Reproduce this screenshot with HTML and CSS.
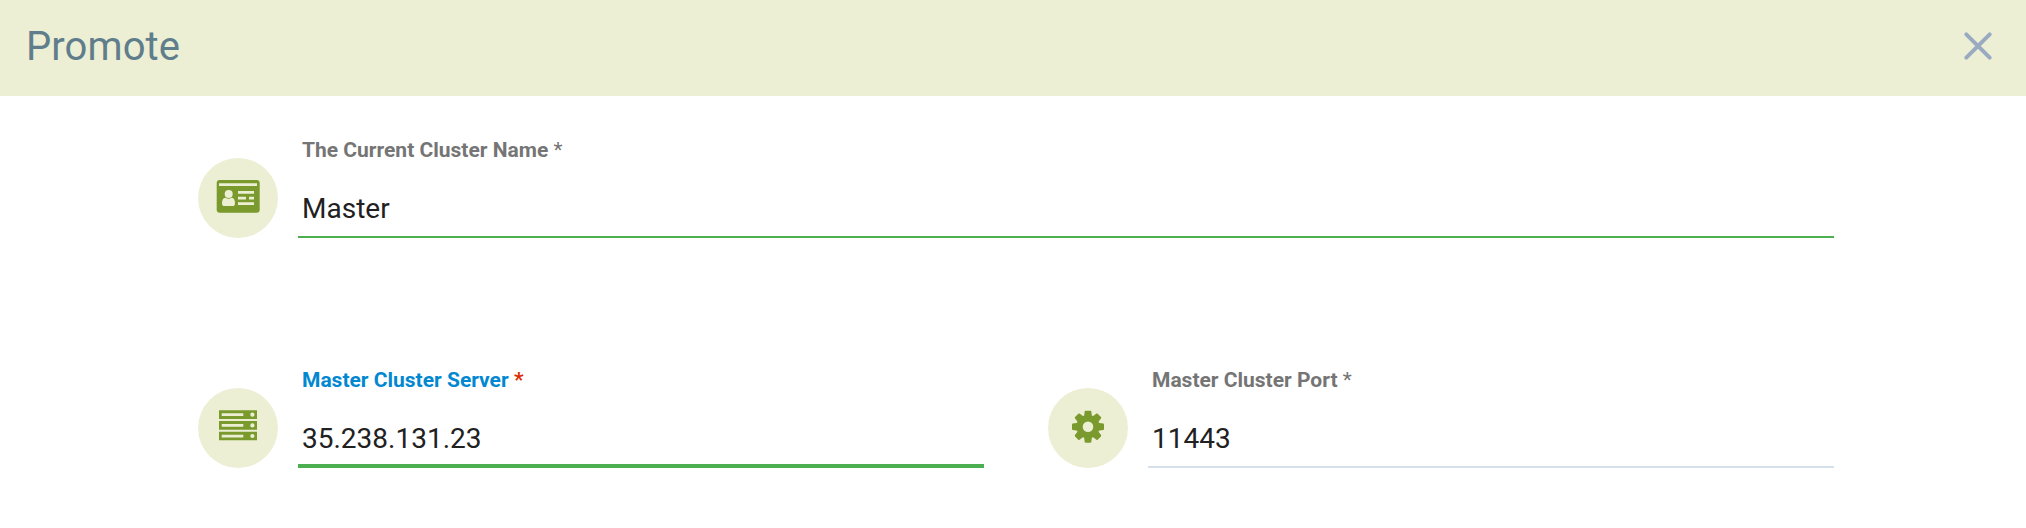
FILE: index.html
```html
<!DOCTYPE html>
<html lang="en">
<head>
<meta charset="utf-8">
<title>Promote</title>
<link rel="stylesheet" href="styles.css">
</head>
<body>
<div class="dialog">
  <header class="toolbar">
    <h1 class="title">Promote</h1>
    <button class="close" type="button" aria-label="Close">
      <svg width="32" height="32" viewBox="0 0 32 32"><path d="M4.300 4.300 27.700 27.700M27.700 4.300 4.300 27.700" stroke="#9aaac1" stroke-width="4" stroke-linecap="round"/></svg>
    </button>
  </header>
  <form class="form">
    <div class="row">
      <div class="group">
        <span class="badge">
          <svg width="80" height="80" viewBox="0 0 80 80">
            <rect class="ink" x="18.700" y="22" width="43" height="32.700" rx="3"/>
            <path class="cut" d="M21 25.300h38v2.700H21zM40 33h16v2.700H40zM40 38.700h8v2.700h-8zM51 38.700h5v2.700h-5zM40 44.300h16v2.700H40z"/>
            <path class="cut" d="M27.300 39.700c-2.400.3-3.300 2.500-3.300 5.500 0 2 1 2.800 2.500 2.800h8c1.500 0 2.500-.8 2.500-2.800 0-3-.9-5.200-3.300-5.500-2 1.500-4.400 1.500-6.400 0z"/>
            <circle class="cut" cx="30.700" cy="35.900" r="4"/>
          </svg>
        </span>
        <label class="field field-valid">
          <span class="label">The Current Cluster Name <span class="star">*</span></span>
          <span class="value">Master</span>
        </label>
      </div>
    </div>
    <div class="row">
      <div class="group">
        <span class="badge">
          <svg width="80" height="80" viewBox="0 0 80 80">
            <path class="ink" d="M21 22.300h38v8.700H21zM21 33h38v8.700H21zM21 43.700h38v8.600H21z"/>
            <path class="cut" d="M23.700 25.300h21.600v2.700H23.700zM23.700 36h21.600v2.700H23.700zM23.700 46.700h21.600v2.700H23.700z"/>
            <circle class="cut" cx="54.400" cy="26.700" r="2.100"/>
            <circle class="cut" cx="54.400" cy="37.400" r="2.100"/>
            <circle class="cut" cx="54.400" cy="48" r="2.100"/>
          </svg>
        </span>
        <label class="field field-focused">
          <span class="label">Master Cluster Server <span class="star">*</span></span>
          <span class="value">35.238.131.23</span>
        </label>
      </div>
      <div class="group">
        <span class="badge">
          <svg width="80" height="80" viewBox="0 0 80 80">
            <defs><path id="tooth" d="M-4-10-3.300-15.200Q-3.100-16-2.300-16H2.300Q3.100-16 3.300-15.200L4-10z"/></defs>
            <g class="ink" transform="translate(40 38.700)">
              <circle r="11.600"/>
              <use href="#tooth"/><use href="#tooth" transform="rotate(45)"/>
              <use href="#tooth" transform="rotate(90)"/><use href="#tooth" transform="rotate(135)"/>
              <use href="#tooth" transform="rotate(180)"/><use href="#tooth" transform="rotate(225)"/>
              <use href="#tooth" transform="rotate(270)"/><use href="#tooth" transform="rotate(315)"/>
            </g>
            <circle class="cut" cx="40" cy="38.700" r="5.300"/>
          </svg>
        </span>
        <label class="field">
          <span class="label">Master Cluster Port <span class="star">*</span></span>
          <span class="value">11443</span>
        </label>
      </div>
    </div>
  </form>
</div>
</body>
</html>
```
FILE: styles.css
```css
* { box-sizing: border-box; }
body {
  margin: 0;
  background: #fff;
  font-family: Roboto, sans-serif;
  color: #212121;
}
.toolbar {
  display: flex;
  align-items: center;
  justify-content: space-between;
  height: 96px;
  padding: 0 32px 4px 26px;
  background: #edefd5;
}
.title {
  margin: 2px 0 0;
  font-size: 40px;
  line-height: 48px;
  font-weight: 400;
  letter-spacing: 0.1px;
  color: #607d8b;
}
.close {
  display: flex;
  padding: 0;
  border: 0;
  background: none;
}
.form {
  display: flex;
  flex-direction: column;
  gap: 126px;
  padding: 38px 192px 0 198px;
}
.row {
  display: flex;
  gap: 64px;
}
.group {
  flex: 1;
  display: flex;
  align-items: flex-end;
  gap: 20px;
}
.badge {
  flex: none;
  width: 80px;
  height: 80px;
  border-radius: 50%;
  background: #edefd5;
}
.badge svg { display: block; }
.ink { fill: #7a9a2e; }
.cut { fill: #edefd5; }
.field {
  flex: 1;
  display: flex;
  flex-direction: column;
  height: 104px;
  padding: 0 4px;
  border-bottom: 2px solid #d5e0ea;
}
.field-valid { border-bottom-color: #4caf50; }
.field-focused { border-bottom: 4px solid #4caf50; }
.label {
  font-size: 21px;
  line-height: 32px;
  font-weight: 700;
  color: #757575;
}
.star { font-weight: 400; }
.field-focused .label { color: #0288d1; }
.field-focused .star { color: #dd2c00; font-weight: 700; }
.value {
  margin-top: 27px;
  font-size: 28px;
  line-height: 32px;
}
```
